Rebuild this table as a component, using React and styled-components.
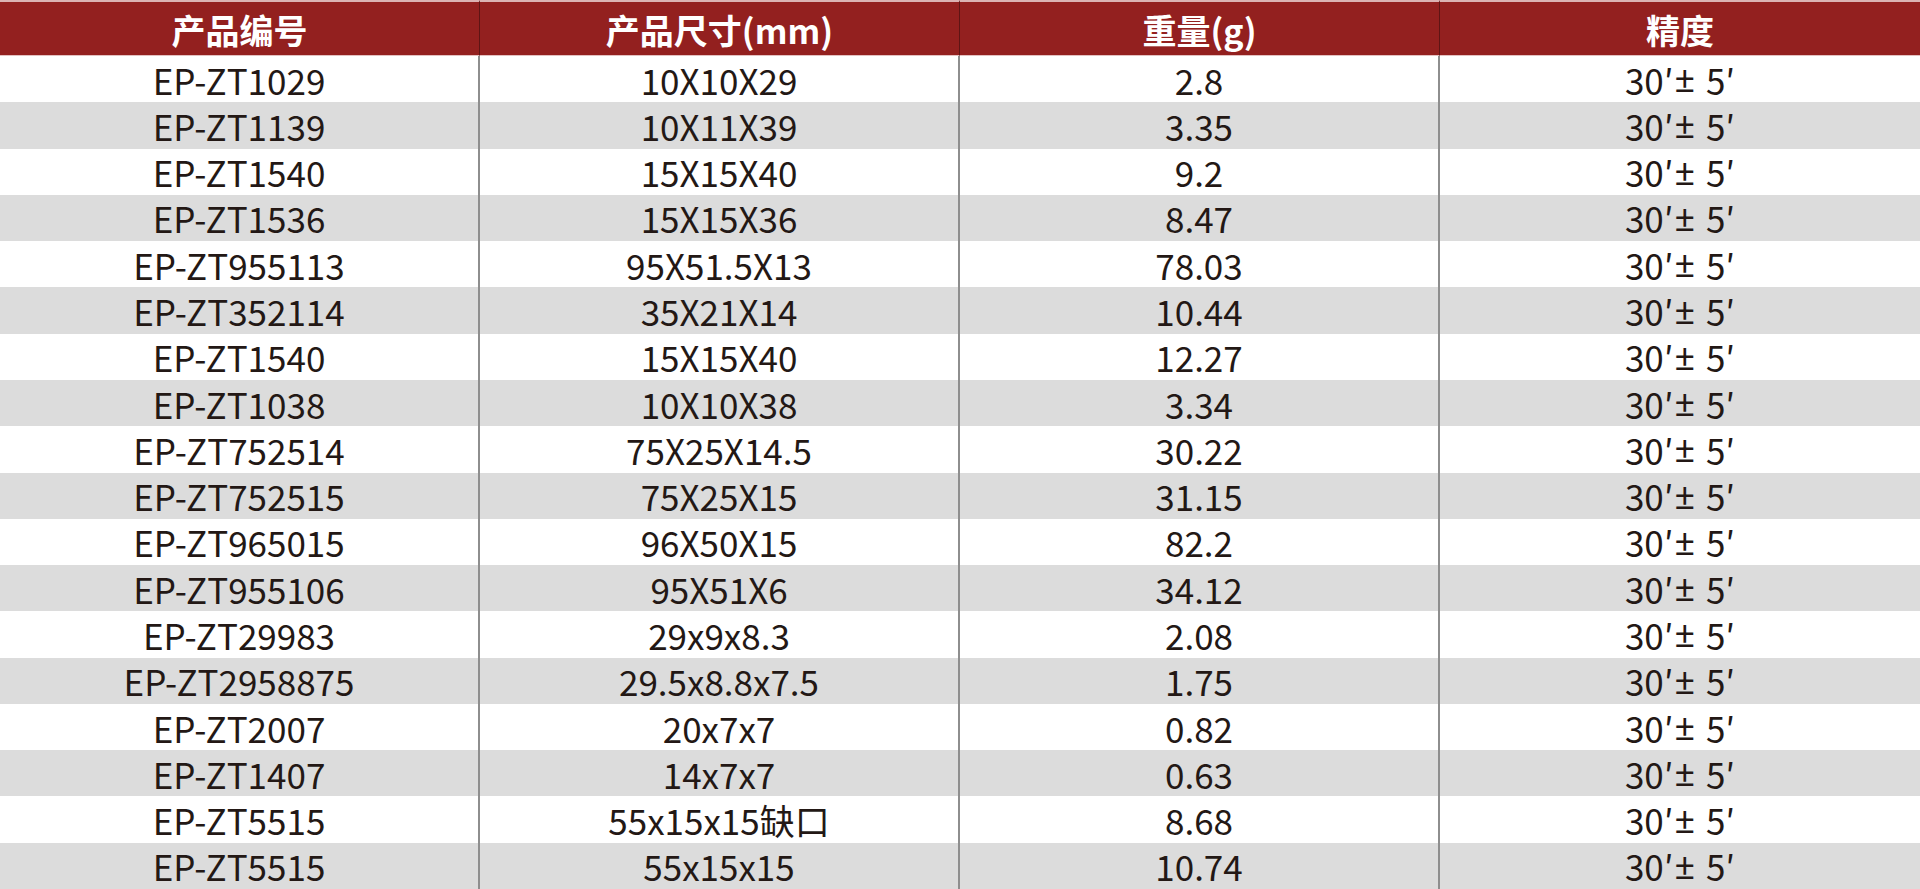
import React from 'react';
import styled, { createGlobalStyle } from 'styled-components';

const GlobalStyle = createGlobalStyle`
  html, body {
    margin: 0;
    padding: 0;
    background: #ffffff;
    overflow: hidden;
  }
`;

const Table = styled.div`
  display: grid;
  grid-template-columns: repeat(4, 1fr);
  grid-template-rows: 56px repeat(18, 1fr);
  height: 889px;
  width: 100%;
  font-family: "Noto Sans CJK SC", "Noto Sans", sans-serif;
`;

const HeaderCell = styled.div`
  display: flex;
  align-items: center;
  justify-content: center;
  background: #93201f;
  border-top: 2px solid #dcb3b3;
  border-bottom: 1px solid #e3c1c1;
  border-right: ${({ $last }) => ($last ? 'none' : '1px solid #5e1414')};
  color: #ffffff;
  font-size: 34px;
  font-weight: 700;
  line-height: 1;
  padding-top: 3px;
`;

const Cell = styled.div`
  display: flex;
  align-items: center;
  justify-content: center;
  background: ${({ $alt }) => ($alt ? '#dcdcdc' : '#ffffff')};
  border-right: ${({ $last }) => ($last ? 'none' : '2px solid #8e8e8e')};
  color: #231815;
  font-size: 35px;
  font-weight: 400;
  line-height: 1;
  white-space: pre;
`;

const Sign = styled.span`
  font-family: "Noto Sans", "DejaVu Sans", sans-serif;
  font-size: 36px;
  margin: 0 3px 0 1px;
`;

const headers = ['产品编号', '产品尺寸(mm)', '重量(g)', '精度'];

const rows = [
  ['EP-ZT1029', '10X10X29', '2.8'],
  ['EP-ZT1139', '10X11X39', '3.35'],
  ['EP-ZT1540', '15X15X40', '9.2'],
  ['EP-ZT1536', '15X15X36', '8.47'],
  ['EP-ZT955113', '95X51.5X13', '78.03'],
  ['EP-ZT352114', '35X21X14', '10.44'],
  ['EP-ZT1540', '15X15X40', '12.27'],
  ['EP-ZT1038', '10X10X38', '3.34'],
  ['EP-ZT752514', '75X25X14.5', '30.22'],
  ['EP-ZT752515', '75X25X15', '31.15'],
  ['EP-ZT965015', '96X50X15', '82.2'],
  ['EP-ZT955106', '95X51X6', '34.12'],
  ['EP-ZT29983', '29x9x8.3', '2.08'],
  ['EP-ZT2958875', '29.5x8.8x7.5', '1.75'],
  ['EP-ZT2007', '20x7x7', '0.82'],
  ['EP-ZT1407', '14x7x7', '0.63'],
  ['EP-ZT5515', '55x15x15缺口', '8.68'],
  ['EP-ZT5515', '55x15x15', '10.74'],
];

const Precision = () => (
  <>
    30′<Sign>±</Sign> 5′
  </>
);

export default function App() {
  return (
    <>
      <GlobalStyle />
      <Table>
        {headers.map((h, i) => (
          <HeaderCell key={h} $last={i === headers.length - 1}>
            {h}
          </HeaderCell>
        ))}
        {rows.map((row, r) => (
          <React.Fragment key={r}>
            {row.map((value, c) => (
              <Cell key={c} $alt={r % 2 === 1}>
                {value}
              </Cell>
            ))}
            <Cell $alt={r % 2 === 1} $last>
              <Precision />
            </Cell>
          </React.Fragment>
        ))}
      </Table>
    </>
  );
}
